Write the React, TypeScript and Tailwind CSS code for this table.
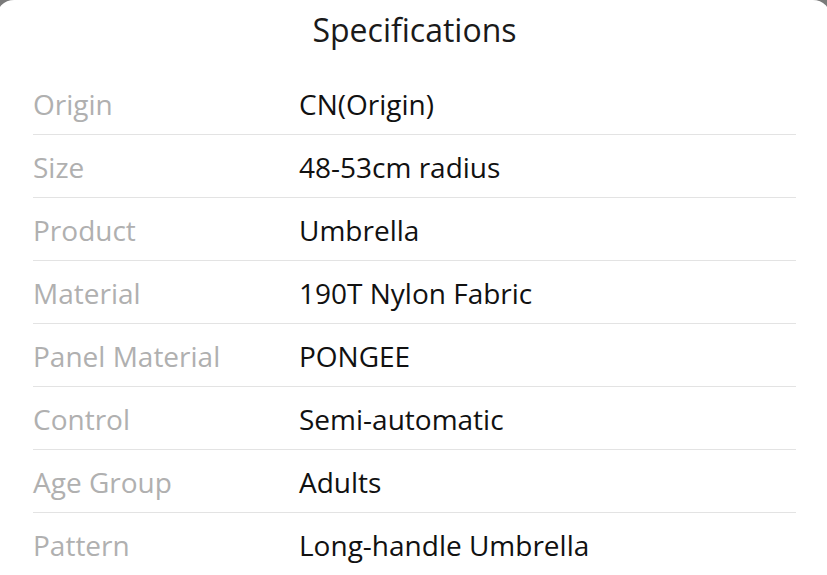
import React from 'react'

const specs = [
    { label: 'Origin', value: 'CN(Origin)' },
    { label: 'Size', value: '48-53cm radius' },
    { label: 'Product', value: 'Umbrella' },
    { label: 'Material', value: '190T Nylon Fabric' },
    { label: 'Panel Material', value: 'PONGEE' },
    { label: 'Control', value: 'Semi-automatic' },
    { label: 'Age Group', value: 'Adults' },
    { label: 'Pattern', value: 'Long-handle Umbrella' },
]

const App = () => {
    return (
        <div className="h-[575px] w-[827px] overflow-hidden bg-[#7a7a7a] font-['Open_Sans',sans-serif]">
            <div className="-mx-[4px] h-full rounded-t-[18px] bg-white pl-[37px] pr-[35px]">
                <div className="flex h-[60px] items-center justify-center text-[32px] text-[#1a1a1a]">
                    Specifications
                </div>
                <div className="mt-[12px]">
                    {specs.map((s) => (
                        <div
                            key={s.label}
                            className="flex h-[63px] items-center border-b border-[#e3e3e3] pt-[1px] text-[28px]"
                        >
                            <span className="w-[266px] shrink-0 text-[#b0b0b0]">{s.label}</span>
                            <span className="text-[#111]">{s.value}</span>
                        </div>
                    ))}
                </div>
            </div>
        </div>
    )
}

export default App
